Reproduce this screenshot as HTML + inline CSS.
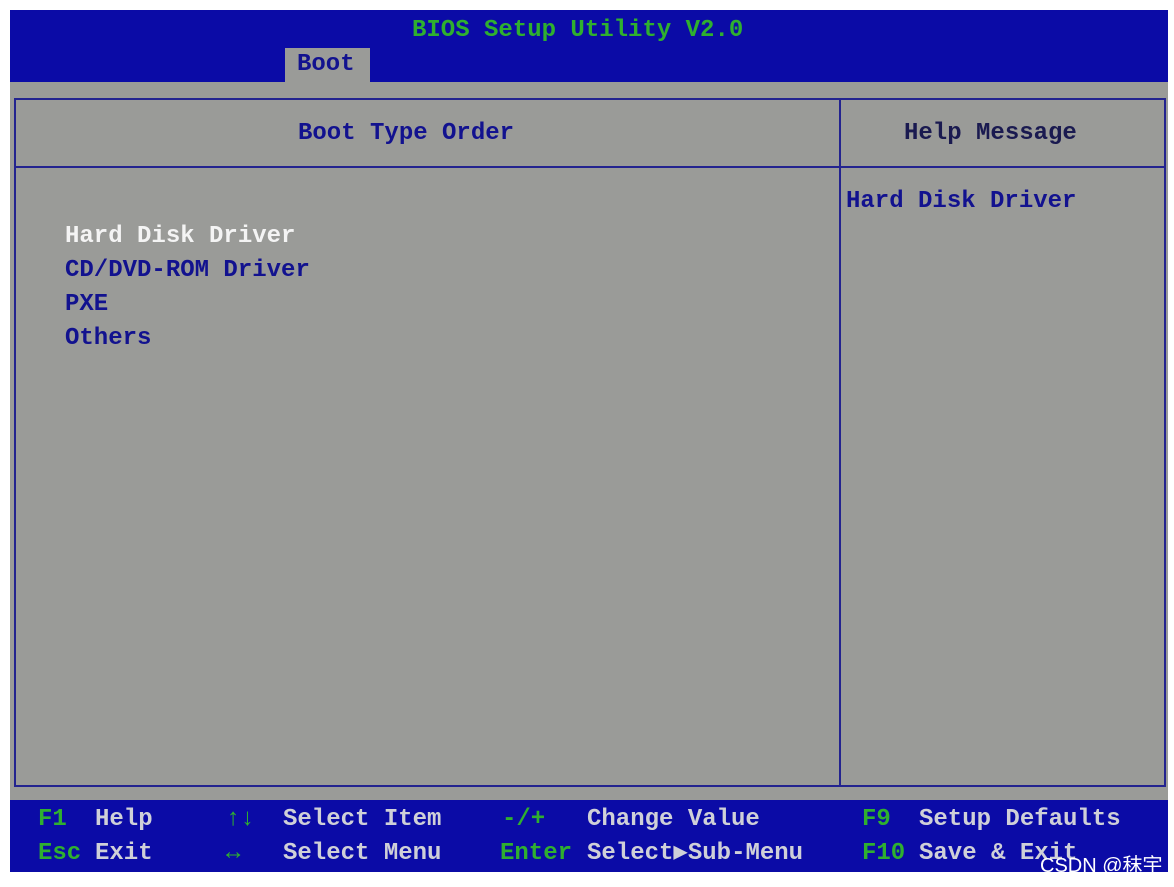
<!DOCTYPE html>
<html><head><meta charset="utf-8"><style>
body{margin:0;width:1174px;height:887px;background:#fff;position:relative;overflow:hidden;font-family:"Liberation Mono",monospace;font-weight:bold;font-size:24px;}
.a{position:absolute;white-space:pre;line-height:30px;}
.blue{background:#0b0ba6;}
</style></head><body>
<div class="a blue" style="left:10px;top:10px;width:1158px;height:72px;"></div>
<div class="a" style="left:10px;top:82px;width:1158px;height:718px;background:#9a9b98;"></div>
<div class="a" style="left:285px;top:48px;width:85px;height:34px;background:#9a9b98;"></div>
<div class="a" style="left:297px;top:50px;color:#12128f;">Boot</div>
<div class="a" style="left:412px;top:16px;color:#2fb02f;">BIOS Setup Utility V2.0</div>
<div class="a" style="left:14px;top:98px;width:1148px;height:685px;border:2px solid #23238f;"></div>
<div class="a" style="left:14px;top:166px;width:1150px;height:2px;background:#23238f;"></div>
<div class="a" style="left:839px;top:98px;width:2px;height:687px;background:#23238f;"></div>
<div class="a" style="left:298px;top:119px;color:#12128f;">Boot Type Order</div>
<div class="a" style="left:904px;top:119px;color:#1a1a50;">Help Message</div>
<div class="a" style="left:846px;top:187px;color:#12128f;">Hard Disk Driver</div>
<div class="a" style="left:65px;top:222px;color:#f4f4f4;">Hard Disk Driver</div>
<div class="a" style="left:65px;top:256px;color:#12128f;">CD/DVD-ROM Driver</div>
<div class="a" style="left:65px;top:290px;color:#12128f;">PXE</div>
<div class="a" style="left:65px;top:324px;color:#12128f;">Others</div>
<div class="a blue" style="left:10px;top:800px;width:1158px;height:72px;"></div>
<div class="a" style="left:38px;top:805px;color:#2fb02f;">F1</div>
<div class="a" style="left:95px;top:805px;color:#cfd0d8;">Help</div>
<div class="a" style="left:226px;top:805px;color:#2fb02f;">↑↓</div>
<div class="a" style="left:283px;top:805px;color:#cfd0d8;">Select Item</div>
<div class="a" style="left:502px;top:805px;color:#2fb02f;">-/+</div>
<div class="a" style="left:587px;top:805px;color:#cfd0d8;">Change Value</div>
<div class="a" style="left:862px;top:805px;color:#2fb02f;">F9</div>
<div class="a" style="left:919px;top:805px;color:#cfd0d8;">Setup Defaults</div>
<div class="a" style="left:38px;top:839px;color:#2fb02f;">Esc</div>
<div class="a" style="left:95px;top:839px;color:#cfd0d8;">Exit</div>
<div class="a" style="left:226px;top:839px;color:#2fb02f;">↔</div>
<div class="a" style="left:283px;top:839px;color:#cfd0d8;">Select Menu</div>
<div class="a" style="left:500px;top:839px;color:#2fb02f;">Enter</div>
<div class="a" style="left:587px;top:839px;color:#cfd0d8;">Select▶Sub-Menu</div>
<div class="a" style="left:862px;top:839px;color:#2fb02f;">F10</div>
<div class="a" style="left:919px;top:839px;color:#cfd0d8;">Save &amp; Exit</div>
<div class="a" style="left:1040px;top:853px;line-height:26px;font-family:'Liberation Sans','Noto Sans CJK SC',sans-serif;font-weight:normal;font-size:20px;color:#fff;">CSDN @秣宇</div>
</body></html>
